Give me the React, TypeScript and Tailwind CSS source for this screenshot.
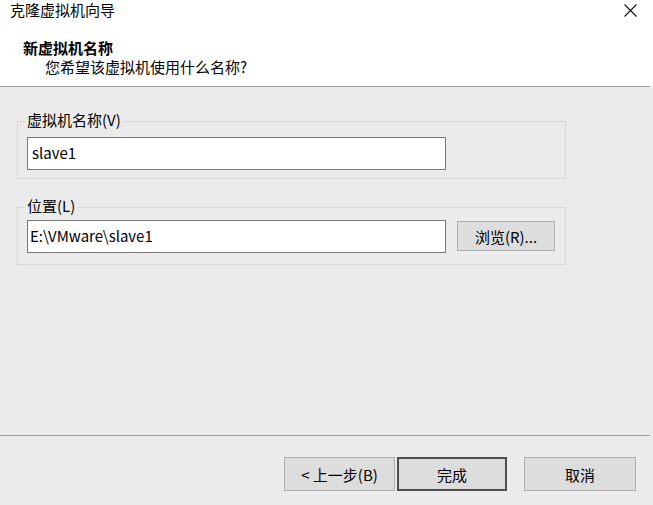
import React from 'react';

const font = { fontFamily: '"Noto Sans CJK SC", "Microsoft YaHei", "Liberation Sans", sans-serif' };

function WinButton({ children, primary = false, className = '' }: { children: React.ReactNode; primary?: boolean; className?: string }) {
    return (
        <button
            className={`h-[34px] bg-[#dddddd] text-[15px] text-black leading-none ${primary ? 'border-2 border-[#4d4d4d]' : 'border border-[#adadad]'} ${className}`}
        >
            {children}
        </button>
    );
}

function GroupBox({ label, children }: { label: string; children: React.ReactNode }) {
    return (
        <div className="relative ml-[17px] w-[549px] h-[58px] border border-[#d6d6d6]">
            <span className="absolute left-[7px] top-[-12px] px-[2px] bg-[#ebebeb] text-[15px] leading-[20px] text-black">
                {label}
            </span>
            {children}
        </div>
    );
}

export default function App() {
    return (
        <div className="w-[653px] h-[505px] flex flex-col bg-[#ebebeb] overflow-hidden select-none" style={font}>
            {/* header */}
            <div className="h-[86px] bg-white flex flex-col">
                <div className="flex items-start justify-between">
                    <div className="pl-[10px] pt-[0px] text-[15px] leading-[20px] text-black">克隆虚拟机向导</div>
                    <svg className="mt-[4px] mr-[16px]" width="13" height="13" viewBox="0 0 13 13">
                        <path d="M0.5 0.5 L12.5 12.5 M12.5 0.5 L0.5 12.5" stroke="#111" strokeWidth="1.1" fill="none" />
                    </svg>
                </div>
                <div className="pl-[23px] mt-[18px] text-[15px] leading-[20px] font-bold text-black">新虚拟机名称</div>
                <div className="pl-[45px] text-[15px] leading-[18px] text-black">您希望该虚拟机使用什么名称?</div>
            </div>
            <div className="h-px w-[650px] bg-[#a0a0a0]" />

            {/* body */}
            <div className="h-[348px] flex flex-col">
                <div className="mt-[34px]">
                    <GroupBox label="虚拟机名称(V)">
                        <div className="ml-[9px] mt-[15px] w-[419px] h-[33px] bg-white border border-[#7a7a7a] flex items-center px-[4px] text-[15px] text-black">
                            slave1
                        </div>
                    </GroupBox>
                </div>
                <div className="mt-[28px]">
                    <GroupBox label="位置(L)">
                        <div className="flex items-start ml-[9px] mt-[12px]">
                            <div className="w-[419px] h-[33px] bg-white border border-[#7a7a7a] flex items-center px-[2px] text-[15px] text-black">
                                E:\VMware\slave1
                            </div>
                            <button className="ml-[11px] mt-px w-[98px] h-[30px] bg-[#dddddd] border border-[#adadad] text-[15px] leading-none text-black">
                                浏览(R)...
                            </button>
                        </div>
                    </GroupBox>
                </div>
            </div>
            <div className="h-px w-[650px] bg-[#a0a0a0]" />

            {/* footer */}
            <div className="flex items-start mt-[21px] pl-[284px]">
                <WinButton className="w-[111px]">&lt; 上一步(B)</WinButton>
                <WinButton primary className="ml-[2px] w-[110px]">完成</WinButton>
                <WinButton className="ml-[17px] w-[112px]">取消</WinButton>
            </div>
        </div>
    );
}
